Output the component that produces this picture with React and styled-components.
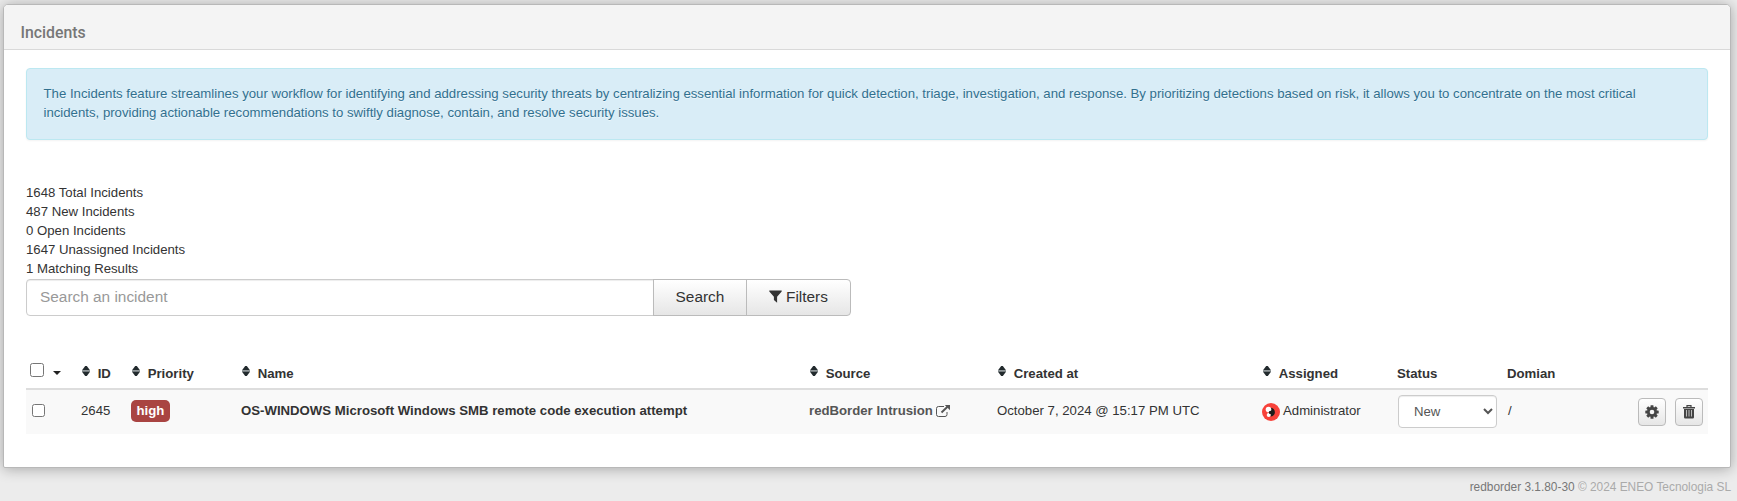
import React from 'react';
import styled, { createGlobalStyle, css } from 'styled-components';

const Global = createGlobalStyle`
  * { box-sizing: border-box; }
  html { height: 100%; background: #ececec; }
  body {
    margin: 0;
    min-height: 501px;
    overflow: hidden;
    background: #ececec;
    color: #333;
    font: 13.2px/19px "Liberation Sans", Arial, sans-serif;
  }
`;

const Page = styled.div`
  padding: 4px 6px 0 3px;
`;

const Panel = styled.section`
  height: 464px;
  background: #fff;
  border: 1px solid #b8b8b8;
  border-radius: 5px 5px 2px 2px;
  box-shadow: 0 1px 14px rgba(0, 0, 0, 0.3);
`;

const PanelHeader = styled.header`
  height: 45px;
  padding: 13px 17px 0 16.5px;
  background: #f4f4f4;
  border-bottom: 1px solid #d9d9d9;
  border-radius: 4px 4px 0 0;
`;

const Title = styled.h1`
  margin: 0;
  color: #777;
  font: 500 15.84px/30px Roboto, sans-serif;
`;

const PanelBody = styled.div`
  padding: 18px 22px 0;
`;

const Alert = styled.div`
  height: 72px;
  padding: 15px 36px 15px 16.5px;
  color: #31708f;
  background: #d9edf7;
  border: 1px solid #bce8f1;
  border-radius: 4px;
  box-shadow: 0 1px 2px rgba(0, 0, 0, 0.05);
  text-shadow: 0 1px 0 rgba(255, 255, 255, 0.5);
`;

const Stats = styled.div`
  margin-top: 43px;
`;

const SearchBar = styled.div`
  display: flex;
  width: 825px;
  height: 37px;
  margin-top: 1px;
  font-size: 15.4px;
`;

const SearchInput = styled.input`
  flex: none;
  width: 628px;
  padding: 0 13px 2px;
  border: 1px solid #ccc;
  border-radius: 4px 0 0 4px;
  background: #fff;
  font: inherit;
  box-shadow: inset 0 1px 1px rgba(0, 0, 0, 0.075);
  &::placeholder { color: #999; opacity: 1; }
`;

const raised = css`
  display: flex;
  flex: none;
  align-items: center;
  justify-content: center;
  padding: 0;
  border: 1px solid #bbb;
  background: linear-gradient(#fff, #e6e6e6);
  color: #333;
`;

const BarButton = styled.button`
  ${raised}
  width: ${(p) => p.$width}px;
  margin-left: -1px;
  padding-bottom: 2px;
  gap: 4px;
  border-radius: ${(p) => (p.$last ? '0 4px 4px 0' : 0)};
  font: inherit;
`;

const Table = styled.table`
  width: 1682px;
  margin-top: 37px;
  table-layout: fixed;
  border-collapse: separate;
  border-spacing: 0;
`;

const HeadCell = styled.th`
  height: 37px;
  padding: 6px 0 0 5px;
  border-bottom: 2px solid #ddd;
  text-align: left;
  white-space: nowrap;
  vertical-align: middle;
`;

const HeadLabel = styled.div`
  display: flex;
  align-items: center;
  gap: 7.4px;
  padding-left: ${(p) => (p.$sortable ? 1.3 : 0)}px;
`;

const SortGlyph = styled.svg`
  flex: none;
  width: 8px;
  height: 10px;
  margin-top: -5px;
`;

const Cell = styled.td`
  height: 44px;
  padding: 0 0 0 ${(p) => p.$indent ?? 5}px;
  background: #f9f9f9;
  white-space: nowrap;
  vertical-align: middle;
`;

const Inline = styled.div`
  display: flex;
  align-items: center;
  height: 19px;
  margin-top: -3px;
  gap: ${(p) => p.$gap || 0}px;
`;

const SelectAll = styled.div`
  display: flex;
  align-items: center;
  gap: 9px;
  margin: -8px 0 0 -1px;
`;

const Check = styled.input`
  width: ${(p) => p.$size}px;
  height: ${(p) => p.$size}px;
  margin: 0;
`;

const Caret = styled.span`
  margin-top: 7px;
  border: 4px solid transparent;
  border-top-color: #222;
  border-bottom: 0;
`;

const Badge = styled.span`
  padding: 0 5.5px 1px;
  border-radius: 5px;
  background: #a94442;
  color: #fff;
  font-weight: bold;
  line-height: 21px;
`;

const SourceLink = styled.a`
  color: #555;
  font-weight: bold;
`;

const Select = styled.select`
  display: block;
  width: 99px;
  height: 33px;
  margin-bottom: 1px;
  padding: 0 0 0 11px;
  border: 1px solid #ccc;
  border-radius: 4px;
  background: #fff;
  color: #555;
  font: inherit;
  box-shadow: inset 0 1px 1px rgba(0, 0, 0, 0.075);
`;

const DomainCell = styled.div`
  display: flex;
  align-items: center;
  justify-content: space-between;
  padding: 0 5px 0 1px;
`;

const Actions = styled.div`
  display: flex;
  gap: 9px;
`;

const IconButton = styled.button`
  ${raised}
  width: 28px;
  height: 28px;
  border-radius: 4px;
`;

const Footer = styled.footer`
  padding-top: 9px;
  color: #aaa;
  font-size: 11.88px;
  line-height: 20px;
  text-align: right;
`;

const Version = styled.span`
  color: #777;
`;

const AvatarImage = styled.svg`
  flex: none;
  width: 18px;
  height: 18px;
  margin-top: 3px;
`;

const SortIcon = () => (
  <SortGlyph viewBox="0 0 8 10">
    <path d="M0 4.2 3.2 0h1.6L8 4.2Z" fill="#222a2d" />
    <path d="M0 4h8v2H0z" fill="#8f9698" />
    <path d="M0 5.8h8L4.8 10H3.2Z" fill="#222a2d" />
  </SortGlyph>
);

const FilterIcon = () => (
  <svg width="13" height="13" viewBox="0 0 13 13">
    <path d="M.3 .5h12.4v1L8.1 6.7v6L4.9 10V6.7L.3 1.5Z" fill="#333" />
  </svg>
);

const ExternalIcon = () => (
  <svg width="14" height="12" viewBox="0 0 14 12">
    <path d="M8 1.5H2.5a2 2 0 0 0-2 2v6a2 2 0 0 0 2 2H9a2 2 0 0 0 2-2V7" fill="none" stroke="#555" />
    <path d="M5.5 7.5 11.5 1.7" stroke="#555" strokeWidth="1.9" />
    <path d="M8.8 0H14v5.2Z" fill="#555" />
  </svg>
);

const GearIcon = () => (
  <svg width="14" height="14" viewBox="0 0 14 14">
    <g fill="#444">
      {[0, 45, 90, 135].map((a) => (
        <rect key={a} x="5.5" y=".3" width="3" height="13.4" rx=".5" transform={`rotate(${a} 7 7)`} />
      ))}
      <circle cx="7" cy="7" r="5" />
    </g>
    <circle cx="7" cy="7" r="2.3" fill="#f4f4f4" />
  </svg>
);

const TrashIcon = () => (
  <svg width="12" height="14" viewBox="0 0 12 14">
    <path d="M4 2V.7h4V2" fill="none" stroke="#444" strokeWidth="1.2" />
    <path d="M0 2h12v1.6H0zM1 4h10v8.3Q11 13.5 9.8 13.5H2.2Q1 13.5 1 12.3z" fill="#444" />
    <path d="M3.5 5v6.5M6 5v6.5M8.5 5v6.5" stroke="#bbb" />
  </svg>
);

const Avatar = () => (
  <AvatarImage viewBox="0 0 18 18">
    <circle cx="9" cy="9" r="9" fill="#f8423a" />
    <path d="M8.5 4.8a4.3 4.3 0 0 1 0 8.8Z" fill="#1d1d1b" />
    <circle cx="6.5" cy="6.6" r="2.8" fill="#fff" />
    <circle cx="6.7" cy="12" r="2" fill="#fff" />
    <circle cx="8.4" cy="9.4" r="1.6" fill="#1d1d1b" />
  </AvatarImage>
);

const stats = [
  '1648 Total Incidents',
  '487 New Incidents',
  '0 Open Incidents',
  '1647 Unassigned Incidents',
  '1 Matching Results',
];

const columns = [
  { label: 'ID', width: 50, sortable: true },
  { label: 'Priority', width: 110, sortable: true },
  { label: 'Name', width: 568, sortable: true },
  { label: 'Source', width: 188, sortable: true },
  { label: 'Created at', width: 265, sortable: true },
  { label: 'Assigned', width: 135, sortable: true },
  { label: 'Status', width: 110 },
  { label: 'Domian', width: 206 },
];

export default function App() {
  return (
    <>
      <Global />
      <Page>
        <Panel>
          <PanelHeader>
            <Title>Incidents</Title>
          </PanelHeader>
          <PanelBody>
            <Alert>
              The Incidents feature streamlines your workflow for identifying and addressing security threats by
              centralizing essential information for quick detection, triage, investigation, and response. By
              prioritizing detections based on risk, it allows you to concentrate on the most critical incidents,
              providing actionable recommendations to swiftly diagnose, contain, and resolve security issues.
            </Alert>
            <Stats>
              {stats.map((s) => (
                <div key={s}>{s}</div>
              ))}
            </Stats>
            <SearchBar>
              <SearchInput placeholder="Search an incident" />
              <BarButton $width={94}>Search</BarButton>
              <BarButton $width={105} $last>
                <FilterIcon />
                Filters
              </BarButton>
            </SearchBar>
            <Table>
              <colgroup>
                <col width="50" />
                {columns.map((c) => (
                  <col key={c.label} width={c.width} />
                ))}
              </colgroup>
              <thead>
                <tr>
                  <HeadCell>
                    <SelectAll>
                      <Check type="checkbox" $size={14} />
                      <Caret />
                    </SelectAll>
                  </HeadCell>
                  {columns.map((c) => (
                    <HeadCell key={c.label}>
                      <HeadLabel $sortable={c.sortable}>
                        {c.sortable && <SortIcon />}
                        {c.label}
                      </HeadLabel>
                    </HeadCell>
                  ))}
                </tr>
              </thead>
              <tbody>
                <tr>
                  <Cell $indent={6}>
                    <Inline>
                      <Check type="checkbox" $size={13} />
                    </Inline>
                  </Cell>
                  <Cell>
                    <Inline>2645</Inline>
                  </Cell>
                  <Cell>
                    <Inline>
                      <Badge>high</Badge>
                    </Inline>
                  </Cell>
                  <Cell>
                    <Inline>
                      <b>OS-WINDOWS Microsoft Windows SMB remote code execution attempt</b>
                    </Inline>
                  </Cell>
                  <Cell>
                    <Inline $gap={3}>
                      <SourceLink>redBorder Intrusion</SourceLink>
                      <ExternalIcon />
                    </Inline>
                  </Cell>
                  <Cell>
                    <Inline>October 7, 2024 @ 15:17 PM UTC</Inline>
                  </Cell>
                  <Cell>
                    <Inline $gap={3}>
                      <Avatar />
                      Administrator
                    </Inline>
                  </Cell>
                  <Cell $indent={6}>
                    <Select defaultValue="New">
                      <option>New</option>
                    </Select>
                  </Cell>
                  <Cell>
                    <DomainCell>
                      <Inline>/</Inline>
                      <Actions>
                        <IconButton>
                          <GearIcon />
                        </IconButton>
                        <IconButton>
                          <TrashIcon />
                        </IconButton>
                      </Actions>
                    </DomainCell>
                  </Cell>
                </tr>
              </tbody>
            </Table>
          </PanelBody>
        </Panel>
        <Footer>
          <Version>redborder 3.1.80-30</Version> © 2024 ENEO Tecnologia SL
        </Footer>
      </Page>
    </>
  );
}
